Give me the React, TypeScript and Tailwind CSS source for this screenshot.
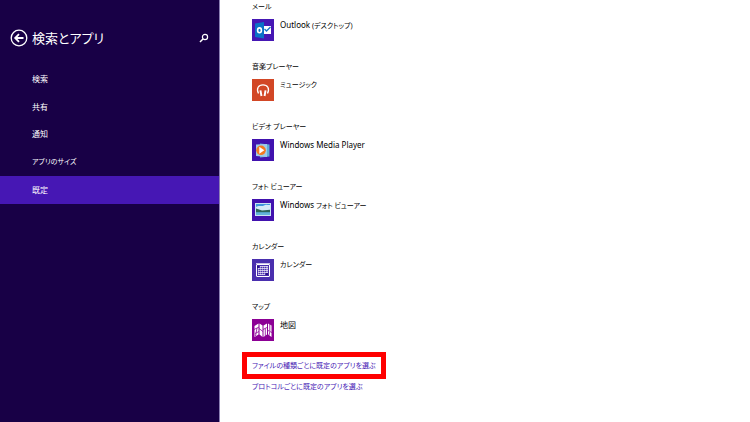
import type { ReactNode } from "react";

const navItems = [
  { label: "検索", size: "text-[8px]" },
  { label: "共有", size: "text-[8px]" },
  { label: "通知", size: "text-[8px]" },
  { label: "アプリのサイズ", size: "text-[7px]" },
  { label: "既定", size: "text-[8px]", current: true },
];

function OutlookIcon() {
  return (
    <svg viewBox="0 0 22 22" className="size-full" aria-hidden="true">
      <rect width="22" height="22" fill="#4617b4" />
      <rect x="10" y="7" width="9" height="8" fill="#fff" />
      <path d="M12.500 10l2 2 4-4" fill="none" stroke="#1673c8" strokeWidth="1.300" />
      <path d="M3 4.500L12 3v16.500L3 18z" fill="#0a72c7" />
      <ellipse cx="7.500" cy="11.300" rx="1.900" ry="2.400" fill="none" stroke="#fff" strokeWidth="1.600" />
    </svg>
  );
}

function MusicIcon() {
  return (
    <svg viewBox="0 0 22 22" className="size-full" aria-hidden="true">
      <rect width="22" height="22" fill="#d24726" />
      <path d="M6.500 14.500C4 9.500 6.500 5.800 11 5.800s7 3.700 4.500 8.700" fill="none" stroke="#fff" strokeWidth="1.300" />
      <path d="M7.500 11.600l1.900-.4 1 5.600-1.900.4zM14.500 11.600l-1.900-.4-1 5.600 1.900.4z" fill="#fff" />
    </svg>
  );
}

function MediaPlayerIcon() {
  return (
    <svg viewBox="0 0 22 22" className="size-full" aria-hidden="true">
      <rect width="22" height="22" fill="#4112ae" />
      <path d="M8 4.500l9.500 1v12L8 18.500z" fill="#5fb0d8" />
      <path d="M4 5.500L15 5v13L4 17z" fill="#9dcbea" />
      <circle cx="9" cy="11.300" r="4.800" fill="#f47a20" />
      <path d="M7.300 7.800l5 3.500-5 3.500z" fill="#fff" />
    </svg>
  );
}

function PhotoIcon() {
  return (
    <svg viewBox="0 0 22 22" className="size-full" aria-hidden="true">
      <rect width="22" height="22" fill="#4112ae" />
      <rect x="3" y="4" width="16" height="13" fill="#c8e4f2" />
      <rect x="4" y="5" width="14" height="11" fill="#3f98dc" />
      <path d="M4 8c3-2 6 0 8-1.500s4 0 6-.5v6H4z" fill="#d5edf7" />
      <path d="M4 9.500l6 2 8-.8v2.800H4z" fill="#2b6659" />
      <path d="M4 13.300h14V16H4z" fill="#62b4d9" />
    </svg>
  );
}

function CalendarIcon() {
  return (
    <svg viewBox="0 0 22 22" className="size-full" aria-hidden="true">
      <rect width="22" height="22" fill="#4a2fae" />
      <rect x="4.500" y="5.500" width="13" height="12" rx=".5" fill="none" stroke="#fff" />
      <path d="M4 4.500h14" stroke="#fff" strokeOpacity=".7" />
      <path d="M8 7.500h8M6 9.500h10M6 11.500h10M6 13.500h10M6 15.500h7" stroke="#fff" strokeOpacity=".65" />
      <path d="M6.500 9v7M8.500 7v9M10.500 7v9M12.500 7v9M14.500 7v7M15.500 7v7" stroke="#fff" strokeOpacity=".4" />
      <path d="M5 7h2v2H5zM14 14h2v2h-2z" fill="#2b1184" />
    </svg>
  );
}

function MapIcon() {
  return (
    <svg viewBox="0 0 22 22" className="size-full" aria-hidden="true">
      <rect width="22" height="22" fill="#8c0095" />
      <path d="M2.500 7L6.500 4.500v11l-4 2.500zM7.500 4.500l3 2V18l-3-2.500zM11.500 6.500l3.500-2v11l-3.500 2.500zM16 4.500l3.500 2V18L16 15.500z" fill="#fff" />
      <path d="M2 10.500l5-2.500M5 9l-1.500 8M7 9.500l4 3M3 14.500l4-2M11 10.500l4-2M13.300 9.500V17M16 11.500l4 2M17.800 5v7M17.800 13l-1 4" fill="none" stroke="#8c0095" strokeWidth=".8" />
    </svg>
  );
}

const groups: { title: string; app: ReactNode; size: string; icon: ReactNode }[] = [
  { title: "メール", app: <><span className="text-[8px]">Outlook</span> (デスクトップ)</>, size: "text-[7px]", icon: <OutlookIcon /> },
  { title: "音楽プレーヤー", app: "ミュージック", size: "text-[7px]", icon: <MusicIcon /> },
  { title: "ビデオ プレーヤー", app: "Windows Media Player", size: "text-[8px]", icon: <MediaPlayerIcon /> },
  { title: "フォト ビューアー", app: <><span className="text-[8px]">Windows</span> フォト ビューアー</>, size: "text-[7px]", icon: <PhotoIcon /> },
  { title: "カレンダー", app: "カレンダー", size: "text-[7px]", icon: <CalendarIcon /> },
  { title: "マップ", app: "地図", size: "text-[8px]", icon: <MapIcon /> },
];

export default function App() {
  return (
    <div
      lang="ja"
      className="flex min-h-screen bg-white font-['Noto_Sans','Noto_Sans_CJK_JP',sans-serif] text-[7px] leading-3 text-black [font-feature-settings:'palt']"
    >
      <aside className="w-[220px] shrink-0 border-r border-[#8c80b4] bg-[#180046] text-white">
        <header className="flex h-[66px] items-center px-2.5 pt-2.5">
          <button type="button" aria-label="戻る" className="size-[18px]">
            <svg viewBox="0 0 18 18" className="size-full" fill="none" stroke="currentColor" aria-hidden="true">
              <circle cx="9" cy="9" r="7.800" strokeWidth="1.300" />
              <path d="M13.500 9H5.500M9 5.200L5.200 9 9 12.800" strokeWidth="1.800" />
            </svg>
          </button>
          <h1 className="ml-1 text-[13px] leading-5">検索とアプリ</h1>
          <button type="button" aria-label="検索する" className="ml-auto size-2.5">
            <svg viewBox="0 0 10 10" className="size-full" fill="none" stroke="currentColor" aria-hidden="true">
              <circle cx="6" cy="4" r="2.600" strokeWidth="1.200" />
              <path d="M4.200 5.800L1 9" strokeWidth="1.500" />
            </svg>
          </button>
        </header>
        <nav className="grid h-[138px] grid-rows-5">
          {navItems.map((item) => (
            <a
              key={item.label}
              href="#"
              aria-current={item.current ? "page" : undefined}
              className={`flex items-center pb-px pl-8 aria-[current=page]:bg-[#4617b4] ${item.size}`}
            >
              {item.label}
            </a>
          ))}
        </nav>
      </aside>
      <main className="flex min-w-0 flex-1 flex-col items-start pl-8">
        {groups.map((group) => (
          <section key={group.title} className="flex h-15 flex-col gap-1.5 pt-px">
            <h2>{group.title}</h2>
            <button type="button" className="flex items-start gap-1.5 text-left">
              <span className="size-[22px]">{group.icon}</span>
              <span className={group.size}>{group.app}</span>
            </button>
          </section>
        ))}
        <a href="#" className="-mt-2 -ml-2.5 border-5 border-[#f00] px-[5px] pt-[3px] pb-0.5 text-[#4617b4]">
          ファイルの種類ごとに既定のアプリを選ぶ
        </a>
        <a href="#" className="mt-0.5 text-[#4617b4]">
          プロトコルごとに既定のアプリを選ぶ
        </a>
      </main>
    </div>
  );
}
